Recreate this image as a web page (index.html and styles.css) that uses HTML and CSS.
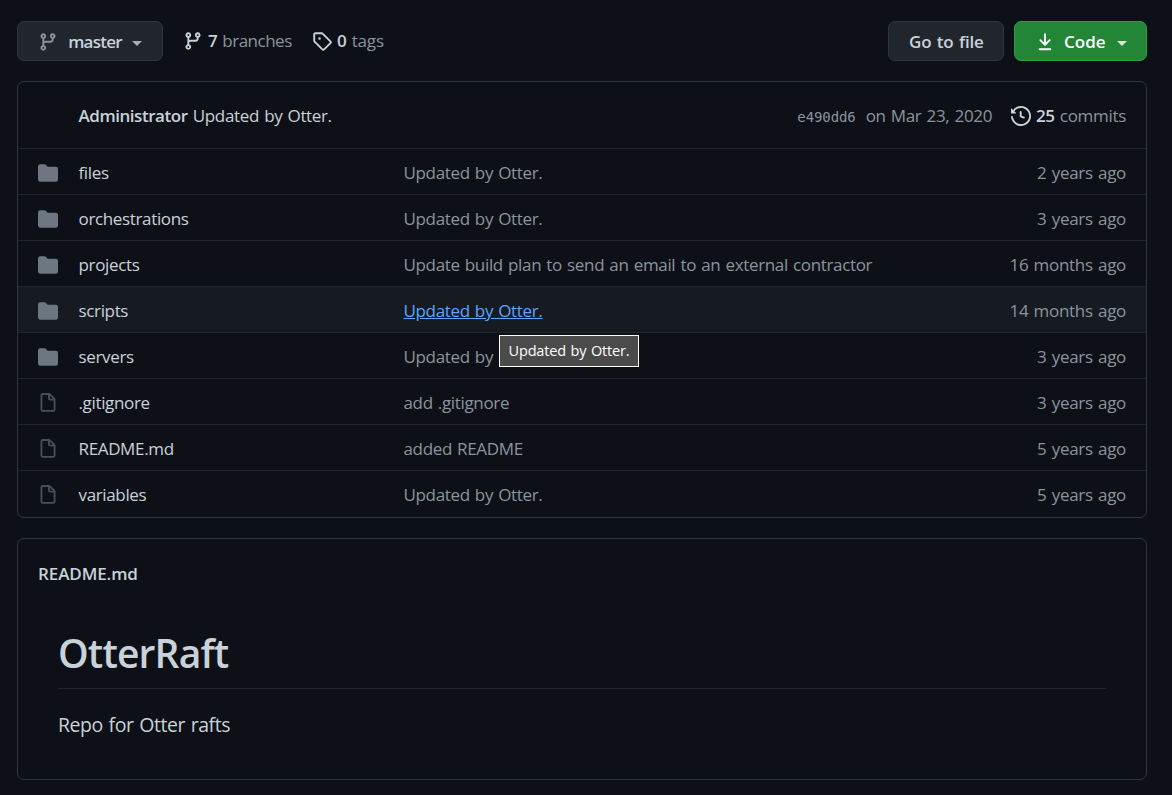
FILE: index.html
```html
<!DOCTYPE html>
<html lang="en">
<head>
<meta charset="utf-8">
<title>OtterRaft</title>
<link rel="stylesheet" href="styles.css">
</head>
<body>
<svg class="sprite" aria-hidden="true">
  <symbol id="branch" viewBox="0 0 16 16"><path fill-rule="evenodd" d="M11.75 2.5a.75.75 0 100 1.5.75.75 0 000-1.5zm-2.25.75a2.25 2.25 0 113 2.122V6A2.5 2.5 0 0110 8.5H6a1 1 0 00-1 1v1.128a2.251 2.251 0 11-1.5 0V5.372a2.25 2.25 0 111.5 0v1.836A2.492 2.492 0 016 7h4a1 1 0 001-1v-.628A2.25 2.25 0 019.5 3.25zM4.25 12a.75.75 0 100 1.5.75.75 0 000-1.5zM3.5 3.25a.75.75 0 111.5 0 .75.75 0 01-1.5 0z"/></symbol>
  <symbol id="tag" viewBox="0 0 16 16"><path fill-rule="evenodd" d="M2.5 7.775V2.75a.25.25 0 01.25-.25h5.025a.25.25 0 01.177.073l6.25 6.25a.25.25 0 010 .354l-5.025 5.025a.25.25 0 01-.354 0l-6.25-6.25a.25.25 0 01-.073-.177zm-1.5 0V2.75C1 1.784 1.784 1 2.75 1h5.025c.464 0 .91.184 1.238.513l6.25 6.25a1.75 1.75 0 010 2.474l-5.026 5.026a1.75 1.75 0 01-2.474 0l-6.25-6.25A1.75 1.75 0 011 7.775zM6 5a1 1 0 100 2 1 1 0 000-2z"/></symbol>
  <symbol id="download" viewBox="0 0 16 16"><path fill-rule="evenodd" d="M7.47 10.78a.75.75 0 001.06 0l3.75-3.75a.75.75 0 00-1.06-1.06L8.75 8.44V1.75a.75.75 0 00-1.5 0v6.69L4.78 5.97a.75.75 0 00-1.06 1.06l3.75 3.75zM3.75 13a.75.75 0 000 1.5h8.5a.75.75 0 000-1.5h-8.5z"/></symbol>
  <symbol id="history" viewBox="0 0 16 16"><path fill-rule="evenodd" d="M1.643 3.143L.427 1.927A.25.25 0 000 2.104V5.75c0 .138.112.25.25.25h3.646a.25.25 0 00.177-.427L2.715 4.215a6.5 6.5 0 11-1.18 4.458.75.75 0 10-1.493.154 8.001 8.001 0 101.6-5.684zM7.75 4a.75.75 0 01.75.75v2.992l2.028.812a.75.75 0 01-.557 1.392l-2.5-1A.75.75 0 017 8.25v-3.5A.75.75 0 017.75 4z"/></symbol>
  <symbol id="folder" viewBox="0 0 16 16"><path d="M1.75 1A1.75 1.75 0 000 2.75v10.5C0 14.216.784 15 1.75 15h12.5A1.75 1.75 0 0016 13.25v-8.5A1.75 1.75 0 0014.25 3h-6.5a.25.25 0 01-.2-.1l-.9-1.2c-.33-.44-.85-.7-1.4-.7h-3.5z"/></symbol>
  <symbol id="file" viewBox="0 0 16 16"><path fill-rule="evenodd" d="M3.75 1.5a.25.25 0 00-.25.25v11.5c0 .138.112.25.25.25h8.5a.25.25 0 00.25-.25V6H9.75A1.75 1.75 0 018 4.25V1.5H3.75zm5.75.56v2.19c0 .138.112.25.25.25h2.19L9.5 2.06zM2 1.75C2 .784 2.784 0 3.75 0h5.086c.464 0 .909.184 1.237.513l3.414 3.414c.329.328.513.773.513 1.237v8.086A1.75 1.75 0 0112.25 15h-8.5A1.75 1.75 0 012 13.25V1.75z"/></symbol>
</svg>
<main class="page">
  <div class="toolbar">
    <button class="btn btn-branch"><svg class="icon"><use href="#branch"/></svg><span class="label">master</span><span class="caret"></span></button>
    <a class="stat stat-branches"><svg class="icon"><use href="#branch"/></svg><span><b>7</b> branches</span></a>
    <a class="stat stat-tags"><svg class="icon"><use href="#tag"/></svg><span><b>0</b> tags</span></a>
    <button class="btn btn-goto"><span class="label">Go to file</span></button>
    <button class="btn btn-code"><svg class="icon"><use href="#download"/></svg><span class="label">Code</span><span class="caret"></span></button>
  </div>

  <section class="box files">
    <div class="commit">
      <span class="summary"><b>Administrator</b> Updated by Otter.</span>
      <span class="sha">e490dd6</span>
      <span class="date">on Mar 23, 2020</span>
      <svg class="icon"><use href="#history"/></svg>
      <span class="count"><b>25</b> commits</span>
    </div>
    <div class="row"><svg class="icon folder"><use href="#folder"/></svg><span class="name">files</span><span class="msg">Updated by Otter.</span><span class="age">2 years ago</span></div>
    <div class="row"><svg class="icon folder"><use href="#folder"/></svg><span class="name">orchestrations</span><span class="msg">Updated by Otter.</span><span class="age">3 years ago</span></div>
    <div class="row"><svg class="icon folder"><use href="#folder"/></svg><span class="name">projects</span><span class="msg">Update build plan to send an email to an external contractor</span><span class="age">16 months ago</span></div>
    <div class="row active"><svg class="icon folder"><use href="#folder"/></svg><span class="name">scripts</span><span class="msg"><a class="link">Updated by Otter.</a><span class="tooltip">Updated by Otter.</span></span><span class="age">14 months ago</span></div>
    <div class="row"><svg class="icon folder"><use href="#folder"/></svg><span class="name">servers</span><span class="msg">Updated by</span><span class="age">3 years ago</span></div>
    <div class="row"><svg class="icon file"><use href="#file"/></svg><span class="name">.gitignore</span><span class="msg">add .gitignore</span><span class="age">3 years ago</span></div>
    <div class="row"><svg class="icon file"><use href="#file"/></svg><span class="name">README.md</span><span class="msg">added README</span><span class="age">5 years ago</span></div>
    <div class="row"><svg class="icon file"><use href="#file"/></svg><span class="name">variables</span><span class="msg">Updated by Otter.</span><span class="age">5 years ago</span></div>
  </section>

  <section class="box readme">
    <h2>README.md</h2>
    <article>
      <h1>OtterRaft</h1>
      <p>Repo for Otter rafts</p>
    </article>
  </section>
</main>
</body>
</html>
```

FILE: styles.css
```css
* { box-sizing: border-box; }

body {
  margin: 0;
  height: 795px;
  overflow: hidden;
  background: #0d1117;
  color: #c9d1d9;
  font: 17px/26px "Open Sans", "Noto Sans", sans-serif;
  letter-spacing: -0.35px;
  word-spacing: 1.1px;
  white-space: nowrap;
}

b { font-weight: 600; letter-spacing: -0.45px; }

.sprite { display: none; }

.icon {
  flex: none;
  width: 20px;
  height: 20px;
  fill: currentColor;
}

.page {
  display: flex;
  flex-direction: column;
  gap: 20px;
  padding: 21px 25px 0 17px;
}

.toolbar {
  display: flex;
  height: 40px;
}

.btn {
  display: flex;
  align-items: center;
  height: 40px;
  padding: 0 20px;
  border: 1px solid #30363d;
  border-radius: 7px;
  background: #21262d;
  color: #c9d1d9;
  font: inherit;
  font-weight: 600;
  letter-spacing: inherit;
  word-spacing: inherit;
}

.btn .icon { margin-top: 2px; color: #8b949e; }
.btn .label { padding-top: 1px; }

.caret {
  margin: 4px 0 0 10px;
  border: 5px solid transparent;
  border-top-color: currentColor;
  border-bottom: 0;
  opacity: .8;
}

.btn-branch { width: 146px; }
.btn-branch .label {
  width: 54px;
  margin-left: 10px;
  letter-spacing: -0.75px;
}

.btn-goto {
  width: 116px;
  margin-left: auto;
  margin-right: 10px;
}
.btn-goto .label { letter-spacing: -0.15px; }

.btn-code {
  width: 133px;
  background: #238636;
  border-color: #2ea043;
  color: #fff;
}
.btn-code .icon { color: #fff; }
.btn-code .label {
  width: 42px;
  margin-left: 9px;
  margin-right: 1px;
  letter-spacing: 0;
}

.stat {
  display: flex;
  align-items: center;
  gap: 5px;
  color: #8b949e;
}
.stat .icon, .stat b { color: #c9d1d9; }
.stat-branches { width: 109px; margin-left: 20px; letter-spacing: -0.5px; }
.stat-tags { margin-left: 20px; letter-spacing: -0.15px; }

.box {
  border: 1px solid #30363d;
  border-radius: 7px;
}

.commit {
  display: flex;
  align-items: center;
  height: 66px;
  padding: 2px 20px 0 60.5px;
  color: #8b949e;
}
.summary { margin-right: auto; color: #c9d1d9; }
.sha {
  margin-right: 10px;
  padding-top: 2px;
  font: 14px/26px "DejaVu Sans Mono", monospace;
  letter-spacing: -0.1px;
}
.date { margin-right: 19px; }
.commit .icon { margin-right: 5px; color: #c9d1d9; }
.count { letter-spacing: -0.3px; }
.count b { color: #c9d1d9; }

.row {
  display: grid;
  grid-template-columns: 40.5px 325px 1fr auto;
  align-items: center;
  height: 46px;
  padding: 2px 20px 0;
  border-top: 1px solid #21262d;
  color: #8b949e;
}
.row:last-child { height: 47px; padding-bottom: 1px; }
.row.active { background: #161b22; }
.folder { color: #6e7681; }
.file { color: #484f58; }
.name { color: #c9d1d9; }
.age { letter-spacing: -0.3px; }
.msg { position: relative; }
.link { color: #58a6ff; text-decoration: underline; }

.tooltip {
  position: absolute;
  z-index: 1;
  left: 95.5px;
  top: 37px;
  width: 140px;
  height: 32px;
  border: 1px solid #fff;
  background: #4b4b4b;
  color: #fff;
  font-size: 14.5px;
  line-height: 30px;
  letter-spacing: -0.18px;
  text-align: center;
}

.readme { height: 242px; padding: 21px 20px; }
.readme h2 {
  margin: 0;
  font-size: 17px;
  line-height: 28px;
  font-weight: 600;
  letter-spacing: -0.1px;
}
.readme article { padding: 40px 20px 0; }
.readme h1 {
  margin: 0 0 20px;
  height: 61px;
  border-bottom: 1px solid #21262d;
  font-size: 39px;
  line-height: 50px;
  font-weight: 600;
  letter-spacing: -0.85px;
}
.readme p {
  margin: 0;
  font-size: 19.5px;
  line-height: 32px;
  letter-spacing: -0.45px;
}
```
